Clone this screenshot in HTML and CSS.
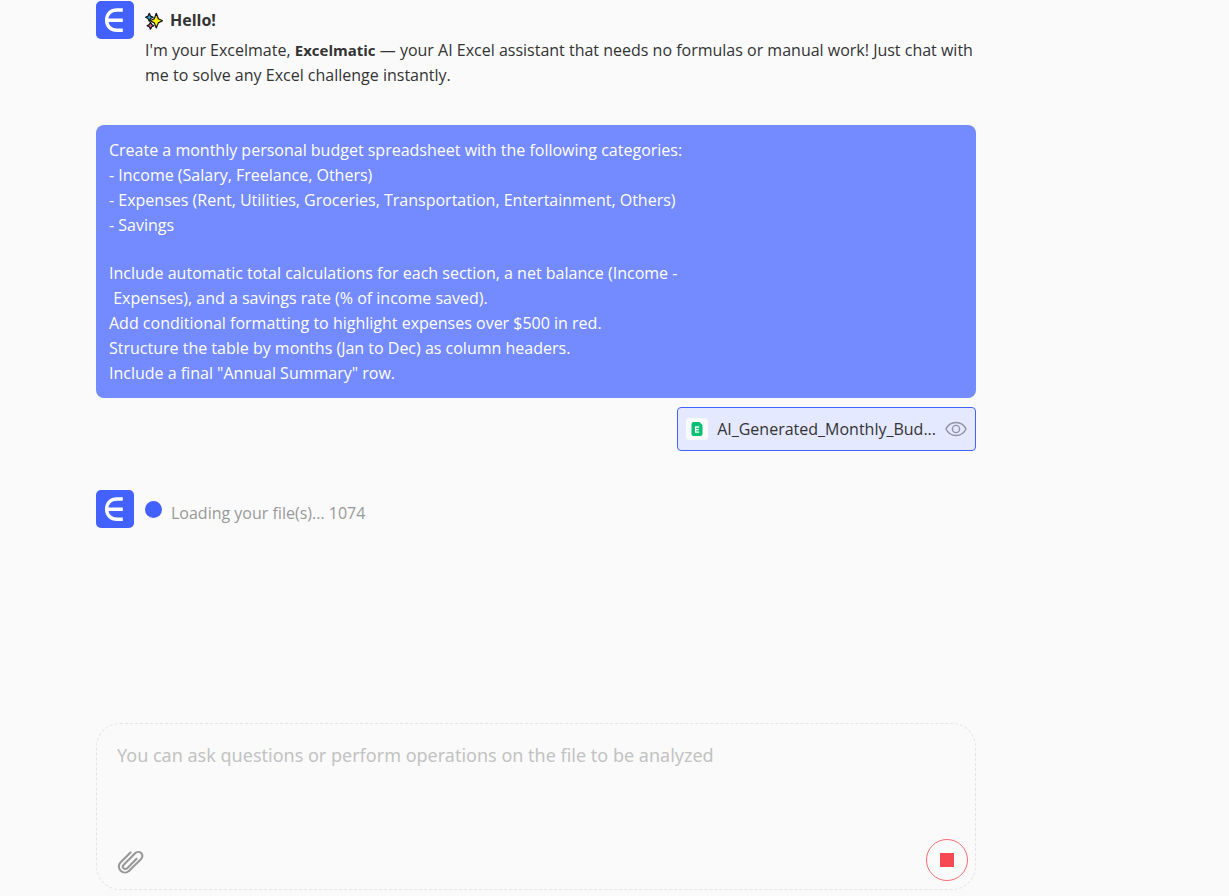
FILE: index.html
```html
<!DOCTYPE html>
<html lang="en">
<head>
<meta charset="utf-8">
<title>Excelmatic</title>
<link rel="stylesheet" href="styles.css">
</head>
<body>
<svg class="symbols" aria-hidden="true">
  <symbol id="logo" viewBox="0 0 38 38">
    <path d="M26.800 9h-5.800C14.800 9 10.700 13 10.700 19.200s4.100 10.100 10.300 10.100h5.800M11 19.200h15.800" fill="none" stroke="#fff" stroke-width="3.400"/>
  </symbol>
</svg>
<div class="page">
  <main class="chat">
    <section class="message">
      <svg class="avatar" role="img" aria-label="Excelmatic"><use href="#logo"/></svg>
      <div class="intro">
        <h1 class="greeting">
          <svg class="sparkles" viewBox="0 0 18 18" aria-hidden="true">
            <g stroke="#111" stroke-width="1.200" stroke-linejoin="round">
              <path d="M4.300 1.300 5.500 4.100 8.200 5.300 5.500 6.500 4.300 9.300 3.100 6.500.6 5.300 3.100 4.100z" fill="#28b4e8"/>
              <path d="M5.500 10.200 6.700 12.600 8.900 13.700 6.700 14.800 5.500 17.200 4.300 14.800 2.100 13.700 4.300 12.600z" fill="#f06ca0"/>
              <path d="M11.300 1.300 13.300 6.700 17.500 8.800 13.300 10.900 11.300 16 9.300 10.900 5.100 8.800 9.300 6.700z" fill="#fff200"/>
            </g>
          </svg>
          Hello!
        </h1>
        <p class="text">I'm your Excelmate, <strong class="name">Excelmatic</strong> — your AI Excel assistant that needs no formulas or manual work! Just chat with me to solve any Excel challenge instantly.</p>
      </div>
    </section>

    <section class="request">
      <div class="bubble">
        <p class="prompt">Create a monthly personal budget spreadsheet with the following categories:
- Income (Salary, Freelance, Others)
- Expenses (Rent, Utilities, Groceries, Transportation, Entertainment, Others)
- Savings</p>
        <p class="prompt">Include automatic total calculations for each section, a net balance (Income -
 Expenses), and a savings rate (% of income saved).
Add conditional formatting to highlight expenses over $500 in red.
Structure the table by months (Jan to Dec) as column headers.
Include a final "Annual Summary" row.</p>
      </div>
      <button class="file" type="button" aria-label="Preview AI_Generated_Monthly_Budget">
        <svg class="file-icon" viewBox="0 0 22 22" aria-hidden="true">
          <rect width="22" height="22" rx="4" fill="#fafafa"/>
          <path d="M7 4h6.500L16.500 7V16a2 2 0 0 1-2 2H7.500a2 2 0 0 1-2-2V6a2 2 0 0 1 2-2z" fill="#07c074"/>
          <path d="M13.200 9H9.600v5.200h3.600M9.600 11.600h3.200" fill="none" stroke="#fff" stroke-width="1.300"/>
        </svg>
        <span class="file-name">AI_Generated_Monthly_Bud...</span>
        <svg class="eye" viewBox="0 0 22 16" aria-hidden="true">
          <path d="M1 8C3 3.700 6.500 1.500 11 1.500S19 3.700 21 8c-2 4.300-5.500 6.500-10 6.500S3 12.300 1 8z"/>
          <circle cx="11" cy="8" r="3.600"/>
        </svg>
      </button>
    </section>

    <section class="message" role="status">
      <svg class="avatar" role="img" aria-label="Excelmatic"><use href="#logo"/></svg>
      <div class="loading"><span class="dot"></span><span class="loading-text">Loading your file(s)... 1074</span></div>
    </section>
  </main>

  <form class="composer">
    <textarea class="input" aria-label="Message" placeholder="You can ask questions or perform operations on the file to be analyzed"></textarea>
    <div class="actions">
      <button class="attach" type="button" aria-label="Attach file">
        <svg class="clip" viewBox="0 0 28 26" aria-hidden="true">
          <path d="M14 2.500 3.800 12.700a6.200 6.200 0 0 0 0 8.900c2.500 2.400 6.300 2.400 8.800 0L24.800 9.500c2-2 2-4.700.3-6.300s-4.400-1.600-6.300.3L7 15.300c-1.200 1.200-1.200 2.800-.2 3.800s2.600 1 3.800-.2L20.300 9.200"/>
        </svg>
      </button>
      <button class="stop" type="button" aria-label="Stop"><span class="stop-mark"></span></button>
    </div>
  </form>
</div>
</body>
</html>
```
FILE: styles.css
```css
* {
  box-sizing: border-box;
}

body {
  margin: 0;
  background: #fafafa;
  color: #333;
  font: 16px/25px "Open Sans", "Noto Sans", sans-serif;
}

h1,
p {
  margin: 0;
}

button {
  padding: 0;
  border: 0;
  background: none;
  color: inherit;
  font: inherit;
  cursor: pointer;
}

svg {
  display: block;
  flex: none;
}

.symbols {
  position: absolute;
  width: 0;
  height: 0;
}

.page {
  display: flex;
  flex-direction: column;
  min-height: 100vh;
  padding: 0 253px 6px 96px;
}

.chat {
  display: flex;
  flex: 1;
  flex-direction: column;
  gap: 39px;
}

.message {
  display: flex;
  gap: 11px;
}

.message:first-child {
  padding-top: 1px;
  margin-bottom: -2px;
}

.avatar {
  width: 38px;
  height: 38px;
  border-radius: 5px;
  background: #4361ff;
}

.intro {
  padding-top: 7px;
}

.greeting {
  display: flex;
  align-items: center;
  gap: 7px;
  margin-bottom: 5px;
  font-size: 16px;
  line-height: 25px;
}

.name {
  font-size: 15px;
}

.sparkles {
  width: 18px;
  height: 18px;
}

.request {
  display: flex;
  flex-direction: column;
  gap: 9px;
}

.bubble {
  display: flex;
  flex-direction: column;
  gap: 23px;
  padding: 13px 13px 12px;
  border-radius: 8px;
  background: #748aff;
  color: #fff;
}

.prompt {
  white-space: pre-wrap;
}

.file {
  display: flex;
  align-items: center;
  align-self: flex-end;
  gap: 9px;
  height: 44px;
  padding: 0 8px;
  border: 1px solid #4361ff;
  border-radius: 4px;
  background: #e4e9ff;
}

.file-icon {
  width: 22px;
  height: 22px;
}

.eye {
  width: 22px;
  height: 16px;
  fill: none;
  stroke: #9093a5;
  stroke-width: 1.400;
}

.loading {
  display: flex;
  align-items: center;
  gap: 9px;
  color: #999;
}

.dot {
  width: 17px;
  height: 17px;
  border-radius: 50%;
  background: #4361ff;
}

.loading-text {
  padding-top: 8px;
}

.composer {
  display: flex;
  flex-direction: column;
  height: 167px;
  padding: 16px 7px 8px 20px;
  border: 1px dashed #e4e4e4;
  border-radius: 24px;
}

.input {
  flex: 1;
  padding: 0;
  border: 0;
  outline: 0;
  resize: none;
  background: none;
  color: #333;
  font: 18px/30px "Noto Sans", "Open Sans", sans-serif;
}

.input::placeholder {
  color: #c2c2c2;
}

.actions {
  display: flex;
  align-items: center;
  justify-content: space-between;
}

.attach {
  padding-top: 4px;
}

.clip {
  width: 27px;
  height: 25px;
  fill: none;
  stroke: #999;
  stroke-width: 2.200;
  stroke-linecap: round;
}

.stop {
  display: grid;
  place-items: center;
  width: 42px;
  height: 42px;
  border: 1px solid #f56c72;
  border-radius: 50%;
}

.stop-mark {
  width: 14px;
  height: 14px;
  background: #f54a52;
}
```
